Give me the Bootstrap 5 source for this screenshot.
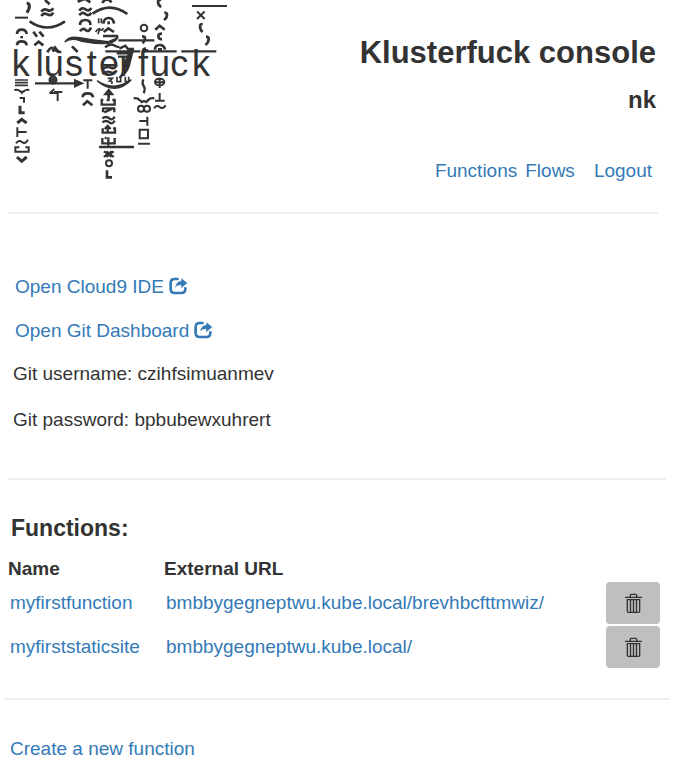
<!DOCTYPE html>
<html lang="en">
<head>
<meta charset="utf-8">
<meta name="viewport" content="width=device-width, initial-scale=1">
<title>Klusterfuck console</title>
<link href="https://cdn.jsdelivr.net/npm/bootstrap@5.3.0/dist/css/bootstrap.min.css" rel="stylesheet">
<style>
body{font-family:"Liberation Sans",Arial,sans-serif;font-size:19px;line-height:26px;color:#333;background:#fff}
a{color:#337ab7;text-decoration:none}
a:hover{text-decoration:underline}
.rule{height:2px;background:#eee;border:0;opacity:1;margin:0}
.logo-art{display:block;width:240px;height:190px}
.logo-art text{font-size:108px;fill:#333}
.site-head{min-height:212px}
.site-title{font-size:31px;line-height:36px;font-weight:700;margin:35px 0 0}
.user-name{font-size:24px;line-height:28px;font-weight:700;margin:15px 0 0}
.head-side{padding-right:18px}
.main-links{margin-top:44px;padding-right:4px}
.main-links .flows-link{margin-right:19px}
.workspace{padding:60px 13px 25px}
.workspace p{margin:0 0 20px}
.workspace .tool-link{margin:0 0 18px;padding-left:2px}
.workspace .tool-link + p:not(.tool-link){margin-top:-1px}
.share-icon{width:20px;height:18px;margin-left:5px;vertical-align:-2px}
.functions{padding:34px 12px 28px 8px}
.functions h2{font-size:23px;line-height:28px;font-weight:700;margin:0 0 14px;padding-left:3px}
.fn-table{width:100%;border-collapse:separate;border-spacing:0}
.fn-table th{padding:0;line-height:26px}
.fn-table td{padding:0 2px 2px;height:44px;line-height:42px}
.fn-table .name-col{width:156px}
.fn-table .act-col{width:58px}
.btn-trash{display:flex;align-items:center;justify-content:center;width:54px;height:42px;padding:0;background:#bfbfbf;border:0;border-radius:4px}
.btn-trash:hover{background:#b2b2b2}
.new-link{padding:36px 10px 20px}
</style>
<script src="https://cdn.jsdelivr.net/npm/bootstrap@5.3.0/dist/js/bootstrap.bundle.min.js"></script>
</head>
<body>
<svg class="d-none" aria-hidden="true">
  <symbol id="share" viewBox="0 0 60 54">
    <path d="M29 6H17Q5 6 5 18v18q0 12 12 12h20q12 0 12-12v-5" fill="none" stroke="currentColor" stroke-width="8"/>
    <path d="M36 2l20 16-20 17V25q-12-1-19 9Q20 13 36 11z" fill="currentColor" stroke="#fff" stroke-width="2"/>
  </symbol>
  <symbol id="trash" viewBox="0 0 51 60">
    <path d="M0 13H51M16 11V7q0-3 3-3h13q3 0 3 3v4M7 20V55q0 3 3 3h31q3 0 3-3V20zM16.500 21v36M25.500 21v36M34.500 21v36" fill="none" stroke="#333" stroke-width="4"/>
  </symbol>
</svg>

<header class="site-head d-flex justify-content-between">
  <svg class="logo-art flex-shrink-0" viewBox="0 0 720 570" role="img" aria-label="klusterfuck">
    <text y="228" x="35 107 131 195 260 297 358 414 450 511 576">klusterfuck</text>
    <g fill="none" stroke="#333" stroke-width="6">
      <!-- marks over the first letters -->
      <path d="M45 53h39" />
      <path d="M51 102q0-13 14-13t15 13M51 136q0-12 14-12t15 12" stroke-width="8"/>
      <path d="M80 10q8 0 8 8 0 12-8 20" stroke-width="9"/>
      <path d="M89 64Q142 101 195 64" stroke-width="8"/>
      <path d="M124 35q7-11 18-5t18-5M124 48q7-11 18-5t18-5M135 0l14 13M100 95l11 15M118 95l13 15M103 136l13-11 14 11M142 157q10-20 20-10t22 9M158 155l7-12 10 12M216 139l17 17" stroke-width="8"/>
      <path d="M61 108h8v7h-8z" fill="#333" stroke="none"/>
      <!-- stack over the t and e -->
      <path d="M233 5l22-9 16 11M238 32q8-12 18-4t18-4M238 46q8-12 18-4t18-4M240 75q0-15 16-15t15 15M240 94q8-12 17-4t16-7" stroke-width="8"/>
      <path d="M306 8l15-13 14 12M278 41Q330 4 382 42M310 71q2-17 16-17t16 17M311 96l14-11 17 11" stroke-width="8"/>
      <path d="M296 55v15M304 55v15M287 96q8-13 14-6 8 2 8-6M300 84l-6 19" stroke-width="5"/>
      <path d="M322 64h8v9h-8z" fill="#333" stroke="none"/>
      <path d="M194 126Q207 106 240 113q40 8 85 12l28-12q-8 18-45 18Q260 130 230 119q-24-4-36 7z" fill="#333" stroke-width="4"/>
      <path d="M309 108h42v8M355 121h108M316 154h105M425 154h105M544 154h105M315 142q15-13 27-6t16 3M350 160h42M354 170h36M307 208q14-11 25-5t18-6M307 222q14-11 25-5t18-6M358 146l18-9 8 10 18 0" stroke-width="7"/>
      <path d="M386 155q-1 20-10 33-6 34-18 45 22-11 29-34 5-20 12-47z" fill="#333" stroke-width="5"/>
      <path d="M291 242Q340 277 394 239Q346 289 291 242z" fill="#333" stroke-width="4"/>
      <path d="M323 235h14l-8 8q10 0 6 9M351 230v15h11v-15M376 230v15h10v-15" stroke-width="5"/>
      <!-- marks over f, u, c and k -->
      <circle cx="432" cy="84" r="10"/>
      <path d="M426 109q9 0 9 6 0 8-7 15M429 154q0-8 9-8M483-2q-9 2-9 7 0 12 10 15M493 38q8 0 8 7 0 9-9 15M466 89l13-12 15 12M486 101q-11 0-11 7 0 10 11 10M465 149q0-14 14-14t16 14" stroke-width="8"/>
      <path d="M474 144h12v9h-12z" fill="#333" stroke="none"/>
      <path d="M576 18h105M591 34l23 23M614 34l-23 23"/>
      <path d="M608 72q-8 0-8 7 0 11 8 17M618 110q8 0 8 7 0 11-10 18" stroke-width="8"/>
      <!-- column below the first k -->
      <path d="M45 240h39M45 248h39M45 256h39" stroke-width="5"/>
      <path d="M43 270q12-2 16 3 6 3 7 5 1-2 7-5 4-5 15-3M59 294h13v14"/>
      <path d="M60 317v21h14M52 369l13-11 15 11" stroke-width="9"/>
      <path d="M52 396h28M52 382v29"/>
      <path d="M48 430q9-12 18-4t18-7M58 442H46v13h40v-13H76"/>
      <path d="M51 471l14 13 15-13" stroke-width="9"/>
      <!-- arrow and marks below u, s and t -->
      <path d="M105 250h123" stroke-width="7"/><path d="M222 236l31 14-31 14z" fill="#333" stroke="none"/>
      <circle cx="159" cy="240" r="10" stroke-width="7"/><circle cx="159" cy="240" r="4"/>
      <path d="M150 279l13-12M148 279h23M162 276h25M173 278v25M250 241h27M263 241v25"/>
      <path d="M248 292q0-12 15-12t16 12M249 316l13-12 15 12" stroke-width="8"/>
      <!-- column below the e -->
      <path d="M326 276v20M317 282l9-11 9 11z" stroke-width="8"/>
      <path d="M310 300h-5v14h39v-14h-7M320 300h9M307 325h38M309 324v13M343 324v13M313 337l24-11M307 355q12-8 21 0t16-5M307 367q12-8 21 0t16-5M308 385v13h37v-13h-6M323 377v20M314 387l9-9 9 9M307 414v16h37v-16M325 412v25M314 414h6" stroke-width="7"/>
      <path d="M297 441h105M312 454q14 12 29 0M312 471q14-16 29 0M320 454l14 17M334 454l-14 17" stroke-width="7"/>
      <circle cx="327" cy="490" r="9"/><path d="M321 511v21h15" stroke-width="8"/>
      <!-- columns below f and u -->
      <path d="M430 238q-5 12 1 20t0 22" stroke-width="7"/>
      <path d="M401 295q12-2 17 5 6 2 7 6 2 0 7-3 6 3 7 3 2-3 6-6 5-7 18-5" stroke-width="7"/>
      <circle cx="423" cy="326" r="9"/><circle cx="441" cy="326" r="9"/>
      <path d="M418 363h27M442 350v27M419 389h25v26h-25zM414 431h36"/>
      <ellipse cx="479" cy="246" rx="14" ry="10"/><path d="M466 247h27M479 233v31M479 279v22M465 302h29M462 325q8-12 17-4t18-5"/>
    </g>
  </svg>
  <div class="head-side text-end flex-grow-1">
    <h1 class="site-title text-nowrap">Klusterfuck console</h1>
    <p class="user-name">nk</p>
    <nav class="main-links d-flex justify-content-end" aria-label="Main">
      <a href="#functions" class="me-2">Functions</a>
      <a href="#flows" class="flows-link">Flows</a>
      <a href="#logout">Logout</a>
    </nav>
  </div>
</header>
<hr class="rule ms-2 me-3">

<main>
  <section class="workspace">
    <p class="tool-link"><a href="#ide">Open Cloud9 IDE<svg class="share-icon" aria-hidden="true"><use href="#share"/></svg></a></p>
    <p class="tool-link"><a href="#git">Open Git Dashboard<svg class="share-icon" aria-hidden="true"><use href="#share"/></svg></a></p>
    <p>Git username: czihfsimuanmev</p>
    <p>Git password: bpbubewxuhrert</p>
  </section>
  <hr class="rule mx-2">

  <section class="functions" id="functions">
    <h2>Functions:</h2>
    <table class="fn-table">
      <thead>
        <tr><th class="name-col" scope="col">Name</th><th scope="col">External URL</th><td class="act-col p-0 h-auto"></td></tr>
      </thead>
      <tbody>
        <tr>
          <td><a href="#myfirstfunction">myfirstfunction</a></td>
          <td><a href="#brevhbcfttmwiz">bmbbygegneptwu.kube.local/brevhbcfttmwiz/</a></td>
          <td><button type="button" class="btn btn-trash" aria-label="Delete myfirstfunction"><svg width="17" height="20"><use href="#trash"/></svg></button></td>
        </tr>
        <tr>
          <td><a href="#myfirststaticsite">myfirststaticsite</a></td>
          <td><a href="#staticsite-url">bmbbygegneptwu.kube.local/</a></td>
          <td><button type="button" class="btn btn-trash" aria-label="Delete myfirststaticsite"><svg width="17" height="20"><use href="#trash"/></svg></button></td>
        </tr>
      </tbody>
    </table>
  </section>
  <hr class="rule mx-1">
  <p class="new-link m-0"><a href="#new">Create a new function</a></p>
</main>
</body>
</html>
